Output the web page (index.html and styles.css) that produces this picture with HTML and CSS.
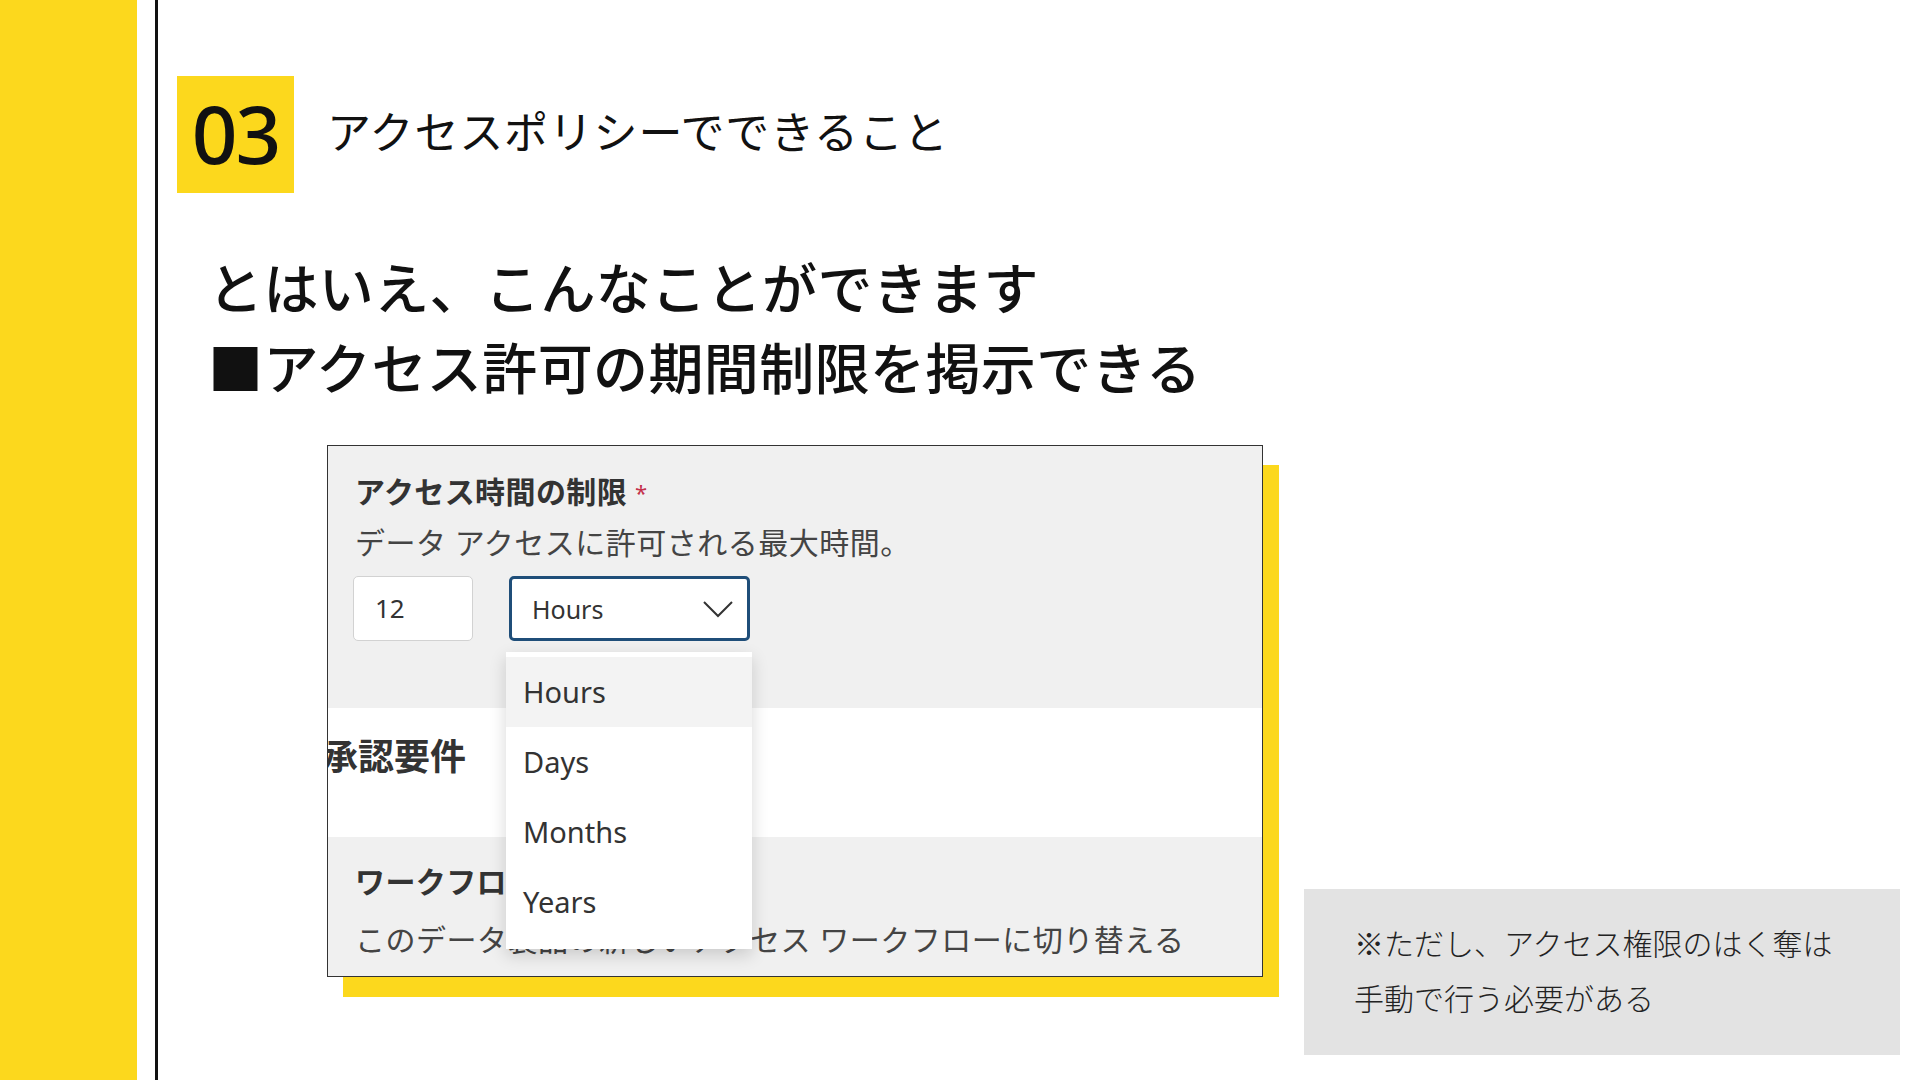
FILE: index.html
```html
<!DOCTYPE html>
<html lang="ja">
<head>
    <meta charset="UTF-8">
    <meta name="viewport" content="width=device-width, initial-scale=1.0">
    <title>アクセスポリシーでできること</title>
    <link rel="stylesheet" href="styles.css">
</head>
<body>
    <div class="side-bar"></div>
    <div class="rule"></div>

    <div class="main">
        <div class="section-head">
            <div class="num">03</div>
            <div class="section-title">アクセスポリシーでできること</div>
        </div>

        <h1 class="lead">
            とはいえ、こんなことができます<br>
            ■アクセス許可の期間制限を掲示できる
        </h1>

        <div class="figure-row">
            <div class="shot">
                <div class="block grey">
                    <div class="field-label">アクセス時間の制限<span class="req">*</span></div>
                    <div class="field-desc">データ アクセスに許可される最大時間。</div>
                    <div class="controls">
                        <div class="num-input">12</div>
                        <div class="select-wrap">
                            <div class="select">
                                <span>Hours</span>
                                <svg width="30" height="18" viewBox="0 0 30 18">
                                    <polyline points="1,2 15,16 29,2" fill="none" stroke="#333" stroke-width="2"/>
                                </svg>
                            </div>
                            <ul class="menu">
                                <li class="active">Hours</li>
                                <li>Days</li>
                                <li>Months</li>
                                <li>Years</li>
                            </ul>
                        </div>
                    </div>
                </div>
                <div class="block white">
                    <div class="sub-title">承認要件</div>
                </div>
                <div class="block grey last">
                    <div class="field-label">ワークフロー</div>
                    <div class="field-desc wf">このデータ製品の新しいアクセス ワークフローに切り替える</div>
                </div>
            </div>

            <div class="note">
                ※ただし、アクセス権限のはく奪は<br>
                手動で行う必要がある
            </div>
        </div>
    </div>
</body>
</html>
```

FILE: styles.css
```css
body { margin: 0; width: 1920px; height: 1080px; overflow: hidden; display: flex; background: #fff; color: #111; font-family: "Noto Sans", "Noto Sans CJK JP", sans-serif; }
.side-bar { width: 137px; background: #fcd81d; flex-shrink: 0; }
.rule { width: 3px; margin-left: 18px; background: #111; flex-shrink: 0; }
.main { flex: 1; display: flex; flex-direction: column; padding: 76px 0 0 19px; }

.section-head { display: flex; align-items: center; }
.num { width: 117px; height: 117px; background: #fcd81d; display: flex; align-items: center; justify-content: center; font-family: "Noto Sans", sans-serif; font-size: 80px; font-weight: 500; letter-spacing: -2px; color: #111; padding-bottom: 4px; box-sizing: border-box; }
.section-title { margin-left: 33px; padding-bottom: 10px; font-family: "Noto Sans CJK JP", sans-serif; font-size: 44px; letter-spacing: 0.8px; line-height: 1; color: #111; }

.lead { margin: 52px 0 0 31px; font-family: "Noto Sans CJK JP", sans-serif; font-size: 55px; font-weight: 500; line-height: 80px; letter-spacing: 0.4px; color: #111; }

.figure-row { display: flex; align-items: flex-start; margin-top: 40px; }
.shot { width: 934px; height: 530px; margin-left: 150px; border: 1px solid #333; box-shadow: 16px 20px 0 #fcd81d; background: #fff; overflow: hidden; font-family: "Noto Sans", "Noto Sans CJK JP", sans-serif; flex-shrink: 0; }
.block { padding-left: 27px; box-sizing: border-box; }
.grey { background: #f0f0f0; }
.block:first-child { height: 262px; padding-top: 26px; }
.white { height: 129px; padding-top: 29px; }
.last { height: 139px; padding-top: 25px; }

.field-label { font-size: 30px; font-weight: 700; line-height: 40px; letter-spacing: 0.4px; color: #333; }
.req { color: #c4314b; font-size: 22px; font-weight: 400; margin-left: 8px; vertical-align: top; }
.field-desc { font-size: 30px; line-height: 40px; letter-spacing: 0.5px; margin-top: 11px; color: #444; }
.field-desc.wf { margin-top: 18px; }
.sub-title { margin-left: -33px; font-size: 36px; font-weight: 700; line-height: 40px; color: #333; }

.controls { display: flex; gap: 36px; margin: 13px 0 0 -2px; }
.num-input { width: 120px; height: 65px; box-sizing: border-box; background: #fff; border: 1px solid #d2d2d2; border-radius: 5px; padding-left: 21px; font-size: 26px; line-height: 63px; color: #333; }
.select-wrap { position: relative; }
.select { width: 241px; height: 65px; box-sizing: border-box; background: #fff; border: 3px solid #1f4e79; border-radius: 5px; display: flex; align-items: center; justify-content: space-between; padding: 0 14px 0 20px; font-size: 25px; color: #333; }
.menu { position: absolute; top: 76px; left: -3px; width: 246px; margin: 0; padding: 5px 0 12px; list-style: none; background: #fff; box-shadow: 0 6px 16px rgba(0,0,0,0.16); z-index: 2; }
.menu li { height: 70px; line-height: 70px; padding-left: 17px; font-size: 29px; color: #333; }
.menu li.active { background: #f3f3f3; }

.note { width: 596px; height: 166px; box-sizing: border-box; margin: 444px 0 0 41px; padding: 26px 0 0 50px; background: #e3e3e3; font-family: "Noto Sans CJK JP", sans-serif; font-size: 30px; font-weight: 300; line-height: 55px; color: #222; flex-shrink: 0; }
```
